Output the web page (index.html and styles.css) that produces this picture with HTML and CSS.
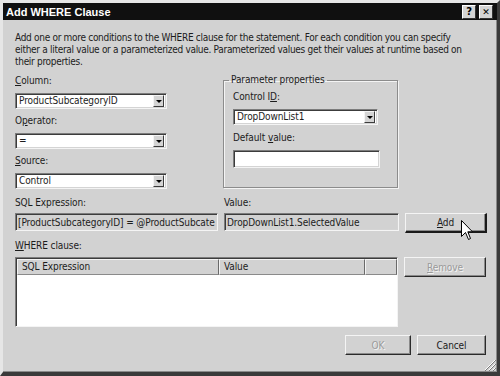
FILE: index.html
```html
<!DOCTYPE html>
<html>
<head>
  <title>Add WHERE Clause</title>
  <link rel="stylesheet" href="styles.css">
</head>
<body>
  <div class="dialog">
    <div class="titlebar">
      <span class="title">Add WHERE Clause</span>
      <div class="caption-buttons">
        <span class="cap-btn">?</span>
        <span class="cap-btn cap-close">&#x2715;</span>
      </div>
    </div>

    <div class="content">
      <p class="intro">Add one or more conditions to the WHERE clause for the statement. For each condition you can specify<br>either a literal value or a parameterized value. Parameterized values get their values at runtime based on<br>their properties.</p>

      <div class="top-row">
        <div class="left-col">
          <div class="field">
            <label><u>C</u>olumn:</label>
            <div class="combo wide">
              <span class="combo-text">ProductSubcategoryID</span>
              <span class="combo-arrow"></span>
            </div>
          </div>
          <div class="field">
            <label>O<u>p</u>erator:</label>
            <div class="combo wide">
              <span class="combo-text">=</span>
              <span class="combo-arrow"></span>
            </div>
          </div>
          <div class="field">
            <label><u>S</u>ource:</label>
            <div class="combo wide">
              <span class="combo-text">Control</span>
              <span class="combo-arrow"></span>
            </div>
          </div>
        </div>

        <fieldset class="params">
          <legend>Parameter properties</legend>
          <label>Control I<u>D</u>:</label>
          <div class="combo narrow">
            <span class="combo-text">DropDownList1</span>
            <span class="combo-arrow"></span>
          </div>
          <label class="default-label">Default <u>v</u>alue:</label>
          <div class="textbox param-box"></div>
        </fieldset>
      </div>

      <div class="expr-row">
        <label>SQL Expression:</label>
        <label>Value:</label>
        <span></span>
        <div class="textbox disabled">[ProductSubcategoryID] = @ProductSubcate</div>
        <div class="textbox disabled">DropDownList1.SelectedValue</div>
        <button class="btn add-btn"><u>A</u>dd</button>
      </div>

      <label class="where-label"><u>W</u>HERE clause:</label>
      <div class="where-row">
        <div class="listview">
          <div class="list-header">
            <span class="col-head col-sql">SQL Expression</span>
            <span class="col-head col-value">Value</span>
            <span class="col-head col-rest"></span>
          </div>
        </div>
        <button class="btn remove-btn" disabled><u>R</u>emove</button>
      </div>

      <div class="footer">
        <button class="btn ok-btn" disabled>OK</button>
        <button class="btn cancel-btn">Cancel</button>
      </div>
    </div>

    <svg class="grip" width="12" height="12" viewBox="0 0 12 12">
      <path d="M11 1 L1 11 M11 5 L5 11 M11 9 L9 11" stroke="#fff" stroke-width="1"/>
      <path d="M12 1 L1 12 M12 5 L5 12 M12 9 L9 12" stroke="#7a7a7a" stroke-width="1"/>
    </svg>

    <svg class="cursor" width="13" height="21" viewBox="0 0 13 21">
      <path d="M0.5 0.5 L0.5 16.5 L4.5 12.5 L7.5 19.5 L9.5 18.5 L6.8 11.8 L11.5 11.8 Z" fill="#fff" stroke="#000" stroke-width="1"/>
    </svg>
  </div>
</body>
</html>
```

FILE: styles.css
```css
body {
  margin: 0;
  padding: 0;
  background-color: #d4d4d4;
  font-family: "DejaVu Sans Condensed", "Liberation Sans", sans-serif;
  font-size: 10px;
  letter-spacing: -0.1px;
  color: #1c1c1c;
}

.dialog {
  position: relative;
  width: 500px;
  height: 376px;
  box-sizing: border-box;
  background-color: #d2d2d2;
  border-style: solid;
  border-width: 3px 3px 4px 3px;
  border-color: #e6e6e6 #3a3a3a #3a3a3a #e6e6e6;
  box-shadow: inset -1px -1px 0 #8a8a8a;
  display: flex;
  flex-direction: column;
}

.titlebar {
  height: 17px;
  background-color: #101010;
  display: flex;
  align-items: center;
  justify-content: space-between;
  padding: 0 4px 0 3px;
}

.title {
  color: #fff;
  font-weight: bold;
  font-size: 11px;
  letter-spacing: 0;
  font-family: "Liberation Sans", sans-serif;
}

.caption-buttons {
  display: flex;
  gap: 3px;
}

.cap-btn {
  width: 12px;
  height: 12px;
  background-color: #d4d4d4;
  border: 1px solid;
  border-color: #fff #333 #333 #fff;
  color: #000;
  font-weight: bold;
  font-size: 10px;
  line-height: 12px;
  text-align: center;
  font-family: "DejaVu Sans", sans-serif;
}

.cap-close {
  font-size: 9px;
}

.content {
  flex: 1;
  padding: 12px 11px 0 12px;
  display: flex;
  flex-direction: column;
}

.intro {
  margin: 0 0 6px;
  line-height: 12px;
  letter-spacing: -0.3px;
  white-space: nowrap;
}

label {
  display: block;
  line-height: 14px;
}

u {
  text-decoration: underline;
  text-underline-offset: 1px;
}

.top-row {
  display: flex;
}

.left-col {
  width: 208px;
}

.field label {
  margin-bottom: 5px;
}

.field {
  margin-bottom: 5px;
}

.combo {
  height: 16px;
  box-sizing: border-box;
  background-color: #fff;
  border: 1px solid;
  border-color: #7c7c7c #f4f4f4 #f4f4f4 #7c7c7c;
  box-shadow: inset 1px 1px 0 #3c3c3c, inset -1px -1px 0 #d4d4d4;
  display: flex;
  align-items: center;
  padding: 1px 2px 1px 3px;
}

.combo.wide {
  width: 152px;
}

.combo.narrow {
  width: 145px;
}

.combo-text {
  flex: 1;
  line-height: 12px;
  white-space: nowrap;
  overflow: hidden;
}

.combo-arrow {
  width: 11px;
  height: 12px;
  box-sizing: border-box;
  background-color: #d4d4d4;
  border: 1px solid;
  border-color: #f4f4f4 #3c3c3c #3c3c3c #f4f4f4;
  position: relative;
}

.combo-arrow::after {
  content: "";
  position: absolute;
  left: 2px;
  top: 4px;
  border-left: 3px solid transparent;
  border-right: 3px solid transparent;
  border-top: 3px solid #000;
}

.params {
  margin: 0;
  width: 175px;
  height: 114px;
  box-sizing: border-box;
  padding: 0 0 0 9px;
  border: 1px solid #8c8c8c;
  box-shadow: inset 1px 1px 0 #f4f4f4, 1px 1px 0 #f4f4f4;
}

.params legend {
  padding: 0 2px;
  margin-left: -4px;
  line-height: 12px;
}

.params label {
  margin-top: 4px;
  margin-bottom: 5px;
}

.params .default-label {
  margin-top: 6px;
}

.textbox {
  height: 18px;
  box-sizing: border-box;
  background-color: #fff;
  border: 1px solid;
  border-color: #7c7c7c #f4f4f4 #f4f4f4 #7c7c7c;
  box-shadow: inset 1px 1px 0 #3c3c3c, inset -1px -1px 0 #d4d4d4;
  padding: 2px 2px;
  line-height: 13px;
  white-space: nowrap;
  overflow: hidden;
}

.param-box {
  width: 147px;
}

.textbox.disabled {
  background-color: #d2d2d2;
}

.expr-row {
  display: grid;
  grid-template-columns: 203px 175px 82px;
  column-gap: 6px;
  margin-top: 2px;
}

.expr-row label {
  margin-bottom: 3px;
}

.btn {
  font-family: inherit;
  font-size: 10px;
  letter-spacing: inherit;
  color: #1c1c1c;
  background-color: #d2d2d2;
  border: 1px solid;
  border-color: #f4f4f4 #2a2a2a #2a2a2a #f4f4f4;
  box-shadow: inset -1px -1px 0 #8a8a8a;
  padding: 0;
  height: 20px;
  box-sizing: border-box;
}

.btn:disabled {
  color: #9a9a9a;
  text-shadow: 1px 1px 0 #f4f4f4;
}

.add-btn {
  border-color: #f4f4f4 #1a1a1a #1a1a1a #f4f4f4;
  border-width: 1px 2px 2px 1px;
}

.where-label {
  margin-top: 6px;
  margin-bottom: 4px;
}

.where-row {
  display: flex;
  gap: 6px;
  align-items: flex-start;
}

.listview {
  width: 383px;
  height: 70px;
  box-sizing: border-box;
  background-color: #fff;
  border: 1px solid;
  border-color: #7c7c7c #f4f4f4 #f4f4f4 #7c7c7c;
  box-shadow: inset 1px 1px 0 #3c3c3c;
  padding: 1px 0 0 1px;
}

.list-header {
  display: flex;
  height: 16px;
}

.col-head {
  box-sizing: border-box;
  background-color: #d2d2d2;
  border: 1px solid;
  border-color: #f4f4f4 #6a6a6a #8a8a8a #f4f4f4;
  line-height: 14px;
  padding-left: 4px;
}

.col-sql {
  width: 202px;
}

.col-value {
  width: 146px;
}

.col-rest {
  flex: 1;
}

.remove-btn {
  width: 82px;
}

.footer {
  display: flex;
  justify-content: flex-end;
  gap: 6px;
  margin-top: 8px;
}

.ok-btn {
  width: 66px;
}

.cancel-btn {
  width: 69px;
}

.grip {
  position: absolute;
  right: 1px;
  bottom: 1px;
}

.cursor {
  position: absolute;
  left: 458px;
  top: 217px;
}
```
